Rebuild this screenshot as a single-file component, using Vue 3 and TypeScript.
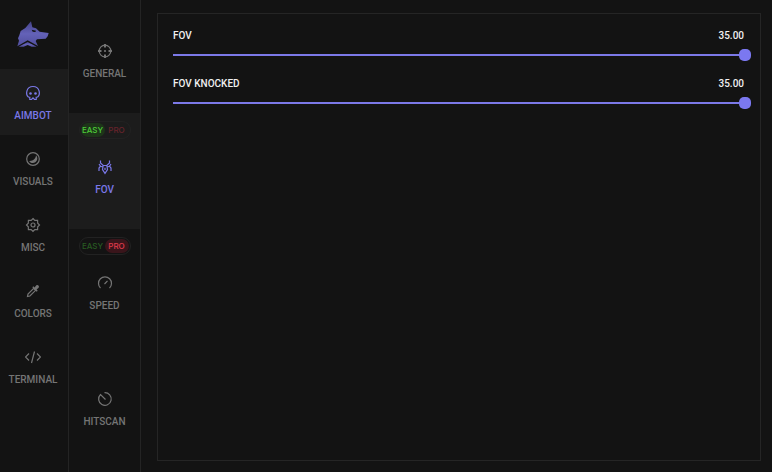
<script setup lang="ts">
import { ref } from 'vue'

type Mode = 'easy' | 'pro'
interface NavItem { id: string; label: string }
interface SubItem extends NavItem { mode?: Mode }
interface Slider extends NavItem { value: number; max: number }

const sections: NavItem[] = [
  { id: 'aimbot', label: 'AIMBOT' },
  { id: 'visuals', label: 'VISUALS' },
  { id: 'misc', label: 'MISC' },
  { id: 'colors', label: 'COLORS' },
  { id: 'terminal', label: 'TERMINAL' },
]
const pages = ref<SubItem[]>([
  { id: 'general', label: 'GENERAL' },
  { id: 'fov', label: 'FOV', mode: 'easy' },
  { id: 'speed', label: 'SPEED', mode: 'pro' },
  { id: 'hitscan', label: 'HITSCAN' },
])
const sliders = ref<Slider[]>([
  { id: 'fov-value', label: 'FOV', value: 35, max: 35 },
  { id: 'fov-knocked', label: 'FOV KNOCKED', value: 35, max: 35 },
])
const section = ref('aimbot')
const page = ref('fov')
</script>

<template>
  <div class="app">
    <nav class="sections">
      <div class="logo">
        <svg viewBox="0 0 96 78" width="32" height="26" aria-hidden="true">
          <defs>
            <linearGradient id="wolf" x1="0" y1="0" x2="0" y2="1">
              <stop offset="0" stop-color="#45438a" />
              <stop offset=".5" stop-color="#6462b8" />
              <stop offset="1" stop-color="#504e9c" />
            </linearGradient>
          </defs>
          <path fill="url(#wolf)" d="M42 1l4 18 11 3 11 10 27 4-3 10-6 7-26 2-4 5 7 15-31-17L1 76l5-17-3-7 4-9 4-13 14-9z" />
          <path fill="url(#wolf)" d="M5 77l27-14 27 14H44l-12-5-12 5z" />
          <path fill="#141414" d="M44 26l13 3-2 4-8-1z" />
        </svg>
      </div>
      <button v-for="s in sections" :key="s.id" type="button" class="item" :class="{ active: section === s.id }" @click="section = s.id">
        <svg class="icon" viewBox="0 0 16 16" aria-hidden="true">
          <g v-if="s.id === 'aimbot'">
            <path d="M3.400 12C.5 9.500.9 1.500 8 1.500s7.500 8 4.600 10.500l-1.400.2v2.300H9.500L8 12.800l-1.500 1.700H4.800v-2.300z" />
            <circle class="solid" cx="5.500" cy="8.500" r="1.300" /><circle class="solid" cx="10.500" cy="8.500" r="1.300" />
          </g>
          <g v-else-if="s.id === 'visuals'">
            <circle cx="8" cy="8" r="6.300" />
            <path class="solid" d="M11 4.300c2.800 3 .8 7.700-3.200 7.700-1.700 0-3-.9-3.700-2.100C8 10.200 10.800 8 11 4.300z" />
          </g>
          <g v-else-if="s.id === 'misc'">
            <path d="M8 1.500l1.800 1.800 2.800.1.100 2.800L14.500 8l-1.800 1.800-.1 2.800-2.800.1L8 14.500l-1.800-1.800-2.800-.1-.1-2.800L1.500 8l1.800-1.800.1-2.800 2.800-.1z" />
            <circle cx="8" cy="8" r="2" />
          </g>
          <g v-else-if="s.id === 'colors'">
            <path d="M8.700 5.400l1.900 1.900-5.700 5.700-2.400.5.500-2.400z" />
            <path class="solid" d="M7.300 4.300l1-1 1.200 1.100 1.700-2c1.500-1.300 3.700.8 2.400 2.400l-2 1.700 1.100 1.200-1 1z" />
          </g>
          <path v-else d="M4 4.500L.5 8 4 11.500M12 4.500L15.500 8 12 11.500M9.500 2.500l-3 11.500" />
        </svg>
        <span class="label">{{ s.label }}</span>
      </button>
    </nav>

    <nav class="pages">
      <div v-for="p in pages" :key="p.id" class="page" :class="{ active: page === p.id }">
        <div class="mode-row">
          <div v-if="p.mode" class="mode">
            <button type="button" class="easy" :class="{ on: p.mode === 'easy' }" @click="p.mode = 'easy'">EASY</button>
            <button type="button" class="pro" :class="{ on: p.mode === 'pro' }" @click="p.mode = 'pro'">PRO</button>
          </div>
        </div>
        <button type="button" class="item" :class="{ active: page === p.id }" @click="page = p.id">
          <svg class="icon" viewBox="0 0 16 16" aria-hidden="true">
            <g v-if="p.id === 'general'">
              <circle cx="8" cy="8" r="5.800" />
              <path class="thick" d="M8 1v3.500M8 11.500V15M1 8h3.500M11.500 8H15" />
              <circle class="solid" cx="8" cy="8" r="1.100" />
            </g>
            <path v-else-if="p.id === 'fov'" d="M3.500 1.500V4L6.200 6.500H9.800L12.500 4V1.500M2 12V9L3.500 7.200 2 5M14 12V9L12.500 7.200 14 5M3.500 7.200L5.800 8M12.500 7.200L10.200 8M6.200 6.500L5.500 10.500 8 14.300 10.500 10.500 9.800 6.500M8 8.700v2.300" />
            <path v-else-if="p.id === 'speed'" d="M3.500 13a6.500 6.500 0 1 1 9 0M7.500 9l3-3.200" />
            <path v-else d="M7.500 1.700A6.300 6.300 0 1 1 3.500 3.500L8.500 8.500" />
          </svg>
          <span class="label">{{ p.label }}</span>
        </button>
      </div>
    </nav>

    <main class="content">
      <section class="panel">
        <div v-for="s in sliders" :key="s.id" class="field">
          <div class="caption">
            <label :for="s.id">{{ s.label }}</label>
            <output :for="s.id">{{ s.value.toFixed(2) }}</output>
          </div>
          <input :id="s.id" v-model.number="s.value" type="range" min="0" :max="s.max" step="0.01">
        </div>
      </section>
    </main>
  </div>
</template>

<style>
body { background: #131313; }
</style>

<style scoped>
.app {
  display: flex;
  height: 100vh;
  overflow: hidden;
  background: #131313;
  color: #f0f0f0;
  font: 500 10px/12px Roboto, "Liberation Sans", sans-serif;
}
.app *, .app { box-sizing: border-box; }
button {
  margin: 0;
  padding: 0;
  border: 0;
  background: none;
  color: inherit;
  font: inherit;
  cursor: pointer;
}
.sections, .pages { flex: none; border-right: 1px solid #242424; }
.sections { width: 69px; }
.pages { width: 72px; }
.logo {
  display: flex;
  align-items: center;
  justify-content: center;
  height: 69px;
  padding: 0 2px 2px 0;
}
.item {
  display: flex;
  flex-direction: column;
  align-items: center;
  gap: 9px;
  width: 100%;
  color: #757575;
}
.sections .item { height: 66px; padding: 16px 2px 0 0; }
.sections .item.active, .pages .item.active { color: #7a78e8; }
.sections .item.active, .page.active { background: #1c1c1c; }
.icon {
  display: block;
  width: 16px;
  height: 16px;
  fill: none;
  stroke: currentColor;
  stroke-width: 1.2;
}
.icon .solid { fill: currentColor; stroke: none; }
.icon .thick { stroke-width: 2; }
.page { height: 116px; padding-top: 8px; }
.page:first-child { height: 113px; padding-top: 5px; }
.mode-row { display: flex; justify-content: center; height: 38px; }
.mode {
  display: flex;
  width: 52px;
  height: 18px;
  padding: 1px;
  border: 1px solid #222;
  border-radius: 9px;
  font-family: Inter, "Liberation Sans", sans-serif;
  font-size: 8px;
}
.mode button { flex: 1; padding-bottom: 1px; border-radius: 7px; }
.easy { color: #285a22; }
.pro { color: #67232b; }
.easy.on { background: #1d3519; color: #4ccb38; }
.pro.on { background: #3a151b; color: #e03a4b; }
.content { flex: 1; min-width: 0; padding: 13px 11px 11px 16px; }
.panel {
  display: flex;
  flex-direction: column;
  gap: 14px;
  height: 100%;
  padding: 16px 9px 16px 15px;
  border: 1px solid #252525;
}
.field { display: flex; flex-direction: column; gap: 7px; height: 34px; }
.caption { display: flex; justify-content: space-between; padding-right: 7px; }
input {
  appearance: none;
  display: block;
  width: 100%;
  height: 12px;
  margin: 0;
  background: linear-gradient(#7c79e8, #7c79e8) center / 100% 2px no-repeat;
}
input::-webkit-slider-thumb {
  appearance: none;
  width: 12px;
  height: 12px;
  border-radius: 5px;
  background: #7b78f0;
}
</style>
